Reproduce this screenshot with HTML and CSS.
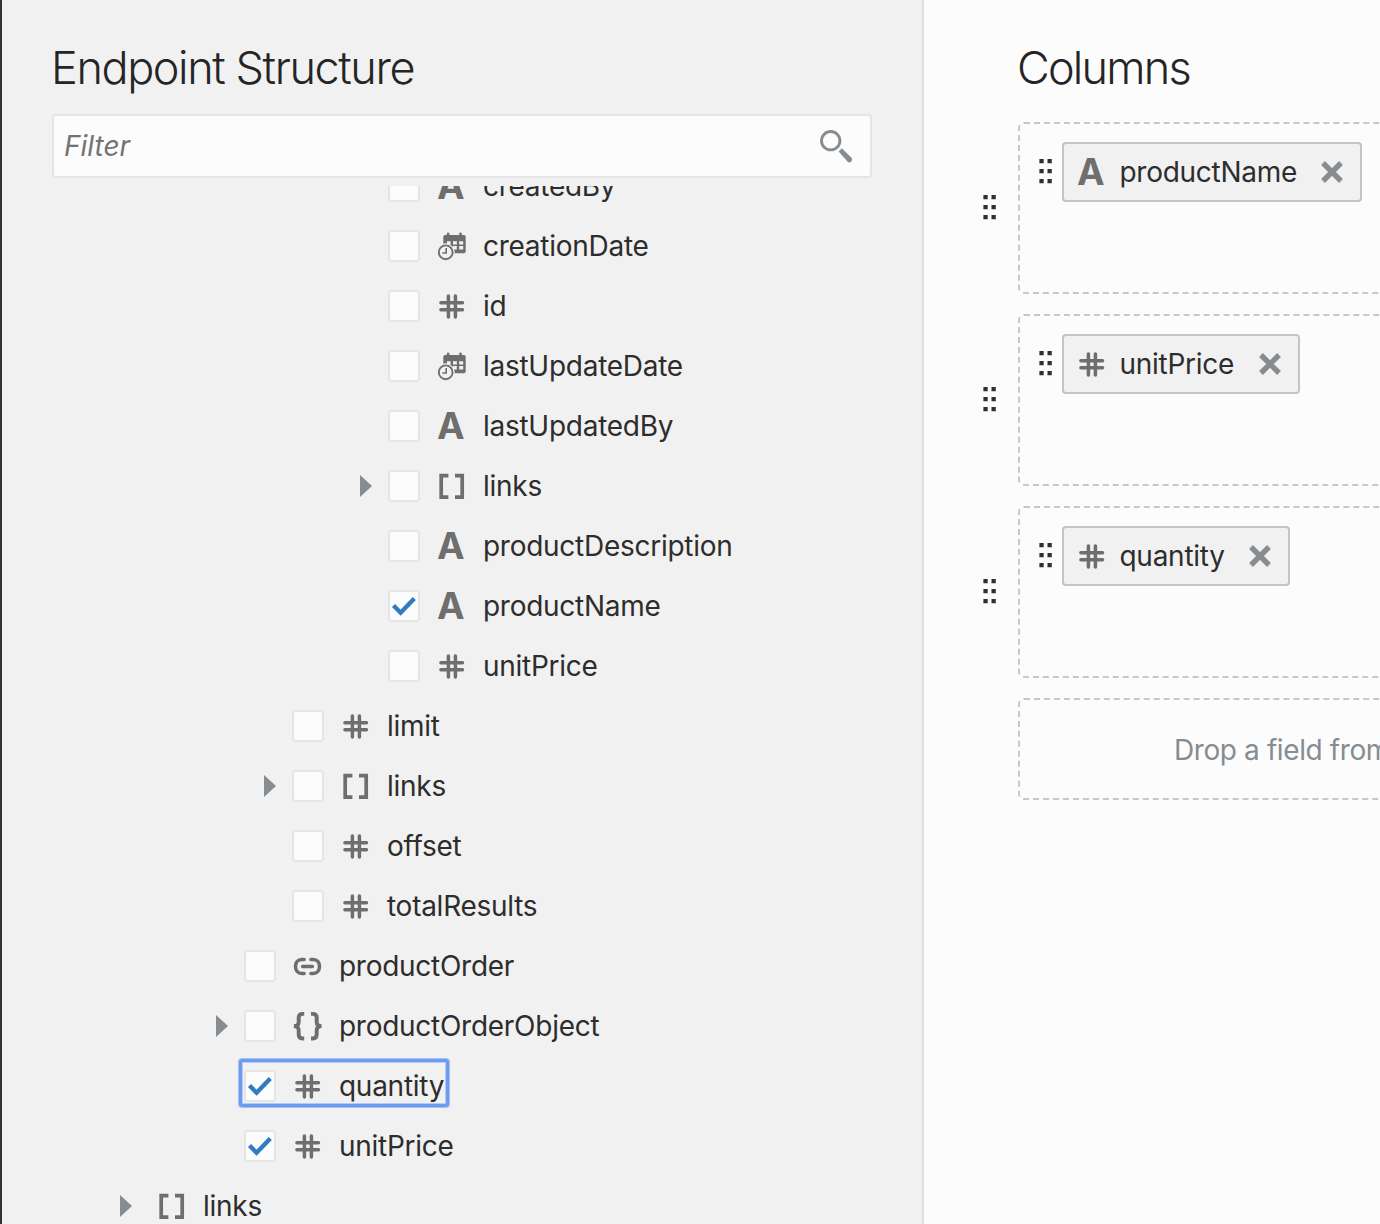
FILE: index.html
```html
<!DOCTYPE html>
<html lang="en">
<head>
<meta charset="utf-8">
<title>Endpoint Structure</title>
<link rel="stylesheet" href="styles.css">
</head>
<body>
<svg class="sprite" aria-hidden="true">
  <symbol id="number" viewBox="0 0 32 32"><path d="M12.4 5.9v21.2M19.4 5.9v21.2M4.9 12.7h21.6M4.9 19.7h21.6" fill="none" stroke="currentColor" stroke-width="3.5" stroke-linecap="round"/></symbol>
  <symbol id="array" viewBox="0 0 32 32"><path d="M12.4 5.6H5.2v21.6h7.2M19 5.6h7.2v21.6H19" fill="none" stroke="currentColor" stroke-width="3.7"/></symbol>
  <symbol id="object" viewBox="0 0 32 32"><path d="M12.2 3.900h-1.600c-2.500 0-3.900 1.400-3.900 3.800v4.200c0 2.700-1.300 4.100-4.800 4.200 3.500.1 4.800 1.600 4.800 4.300v4.200c0 2.500 1.400 3.900 3.900 3.900h1.600M19 3.900h1.800c2.500 0 3.900 1.400 3.900 3.800v4.200c0 2.700 1.300 4.100 4.800 4.200-3.500.1-4.800 1.600-4.800 4.300v4.200c0 2.500-1.400 3.900-3.900 3.900H19" fill="none" stroke="currentColor" stroke-width="3.900"/></symbol>
  <symbol id="link" viewBox="0 0 32 32"><path d="M12.100 9.400H10c-4.300 0-6.500 2.900-6.500 7s2.200 7 6.500 7h2.100M18.900 9.400H21c4.300 0 6.500 2.900 6.500 7s-2.200 7-6.500 7h-2.100M10.600 16.400h9.800" fill="none" stroke="currentColor" stroke-width="3.500" stroke-linecap="round"/></symbol>
  <symbol id="date" viewBox="0 0 32 32">
    <path d="M9 5h1.800V3.800q0-1.300 1.300-1.300t1.300 1.300V5h9.800V3.800q0-1.300 1.300-1.300t1.300 1.300V5H28q1.700 0 1.700 1.700v14.900q0 1.700-1.700 1.700H7.300V6.700Q7.300 5 9 5z" fill="currentColor"/>
    <path d="M11 11.200h3.600v3.200H11zM17 11.200h3.800v3.200H17zM23.200 11.200h4v3.200h-4zM17 16h3.800v3.400H17zM23.200 16h4v3.400h-4z" fill="#f1f1f1"/>
    <circle cx="9.700" cy="22.300" r="9" fill="#f1f1f1"/>
    <circle cx="9.700" cy="22.300" r="6.900" fill="none" stroke="currentColor" stroke-width="1.900"/>
    <path d="M10.200 18v5H6.300" fill="none" stroke="currentColor" stroke-width="1.600"/>
  </symbol>
  <symbol id="check" viewBox="0 0 28 28"><path d="M3.500 13.500l7.100 7.200L24.300 6.400" fill="none" stroke="#2f7cc4" stroke-width="4.400"/></symbol>
  <symbol id="grip" viewBox="0 0 14 26"><path d="M1.400 1h4.300v4.300H1.400zM9.500 1h4.300v4.300H9.500zM1.400 11h4.300v4.300H1.400zM9.500 11h4.300v4.300H9.500zM1.400 21h4.300v4.300H1.400zM9.500 21h4.300v4.300H9.500z" fill="#303030"/></symbol>
  <symbol id="remove" viewBox="0 0 24 24"><path d="M3 3l18 18M21 3L3 21" fill="none" stroke="#878c90" stroke-width="5.400"/></symbol>
</svg>

<div class="app">
  <section class="structure">
    <h1 class="title">Endpoint Structure</h1>
    <div class="filter">
      <span class="filter-hint">Filter</span>
      <svg class="search" viewBox="0 0 34 34"><circle cx="10.700" cy="10.700" r="9.200" fill="none" stroke="#878c90" stroke-width="2.900"/><path d="M18.600 21.600l3.200-3.300L31.500 27.800q1.500 2-.2 3.700t-3.600.2z" fill="#878c90"/></svg>
    </div>
    <div class="viewport">
      <ul class="tree">
        <li class="row depth-4"><span class="arrow"></span><span class="box"></span><span class="icon letter">A</span><span class="name">createdBy</span></li>
        <li class="row depth-4"><span class="arrow"></span><span class="box"></span><svg class="icon"><use href="#date"/></svg><span class="name">creationDate</span></li>
        <li class="row depth-4"><span class="arrow"></span><span class="box"></span><svg class="icon"><use href="#number"/></svg><span class="name">id</span></li>
        <li class="row depth-4"><span class="arrow"></span><span class="box"></span><svg class="icon"><use href="#date"/></svg><span class="name">lastUpdateDate</span></li>
        <li class="row depth-4"><span class="arrow"></span><span class="box"></span><span class="icon letter">A</span><span class="name">lastUpdatedBy</span></li>
        <li class="row depth-4"><span class="arrow closed"></span><span class="box"></span><svg class="icon"><use href="#array"/></svg><span class="name">links</span></li>
        <li class="row depth-4"><span class="arrow"></span><span class="box"></span><span class="icon letter">A</span><span class="name">productDescription</span></li>
        <li class="row depth-4"><span class="arrow"></span><span class="box"><svg class="tick"><use href="#check"/></svg></span><span class="icon letter">A</span><span class="name">productName</span></li>
        <li class="row depth-4"><span class="arrow"></span><span class="box"></span><svg class="icon"><use href="#number"/></svg><span class="name">unitPrice</span></li>
        <li class="row depth-3"><span class="arrow"></span><span class="box"></span><svg class="icon"><use href="#number"/></svg><span class="name">limit</span></li>
        <li class="row depth-3"><span class="arrow closed"></span><span class="box"></span><svg class="icon"><use href="#array"/></svg><span class="name">links</span></li>
        <li class="row depth-3"><span class="arrow"></span><span class="box"></span><svg class="icon"><use href="#number"/></svg><span class="name">offset</span></li>
        <li class="row depth-3"><span class="arrow"></span><span class="box"></span><svg class="icon"><use href="#number"/></svg><span class="name">totalResults</span></li>
        <li class="row depth-2"><span class="arrow"></span><span class="box"></span><svg class="icon"><use href="#link"/></svg><span class="name">productOrder</span></li>
        <li class="row depth-2"><span class="arrow closed"></span><span class="box"></span><svg class="icon"><use href="#object"/></svg><span class="name">productOrderObject</span></li>
        <li class="row depth-2 focused"><span class="arrow"></span><span class="box"><svg class="tick"><use href="#check"/></svg></span><svg class="icon"><use href="#number"/></svg><span class="name">quantity</span></li>
        <li class="row depth-2"><span class="arrow"></span><span class="box"><svg class="tick"><use href="#check"/></svg></span><svg class="icon"><use href="#number"/></svg><span class="name">unitPrice</span></li>
        <li class="row depth-1"><span class="arrow closed"></span><svg class="icon"><use href="#array"/></svg><span class="name">links</span></li>
      </ul>
    </div>
  </section>

  <section class="columns">
    <h1 class="title columns-title">Columns</h1>
    <div class="column">
      <svg class="grip"><use href="#grip"/></svg>
      <div class="slot"><svg class="grip"><use href="#grip"/></svg><div class="chip chip-product"><span class="icon letter">A</span><span class="name">productName</span><svg class="remove"><use href="#remove"/></svg></div></div>
    </div>
    <div class="column">
      <svg class="grip"><use href="#grip"/></svg>
      <div class="slot"><svg class="grip"><use href="#grip"/></svg><div class="chip chip-price"><svg class="icon"><use href="#number"/></svg><span class="name">unitPrice</span><svg class="remove"><use href="#remove"/></svg></div></div>
    </div>
    <div class="column">
      <svg class="grip"><use href="#grip"/></svg>
      <div class="slot"><svg class="grip"><use href="#grip"/></svg><div class="chip chip-quantity"><svg class="icon"><use href="#number"/></svg><span class="name">quantity</span><svg class="remove"><use href="#remove"/></svg></div></div>
    </div>
    <div class="slot drop-slot">Drop a field from</div>
  </section>
</div>
</body>
</html>
```
FILE: styles.css
```css
*, *::after { box-sizing: border-box; }
body {
  margin: 0;
  font-family: Inter, "Liberation Sans", sans-serif;
  font-size: 28px;
  letter-spacing: -0.27px;
  color: #2d2d2d;
  overflow: hidden;
}
.sprite { display: none; }
.app { display: flex; width: 1380px; height: 1224px; overflow: hidden; }

.title {
  margin: 0 0 0 -1px;
  height: 66px;
  line-height: 66px;
  font-size: 45px;
  font-weight: 350;
  letter-spacing: -1.4px;
  color: #252525;
  white-space: nowrap;
}

.structure {
  display: flex;
  flex-direction: column;
  flex: none;
  width: 924px;
  padding: 35px 50px 0;
  background: #f1f1f1;
  border-left: 2px solid #343436;
  border-right: 2px solid #dedede;
}
.filter {
  display: flex;
  align-items: center;
  justify-content: space-between;
  flex: none;
  height: 64px;
  margin-top: 13px;
  padding: 0 16px 0 10px;
  background: #fcfcfc;
  border: 2px solid #e5e5e5;
  border-radius: 4px;
}
.filter-hint { font-style: italic; color: #737373; letter-spacing: 0; }
.search { width: 34px; height: 34px; margin-top: 2px; }

.viewport { flex: 1; min-height: 0; margin: 8px -50px 0; overflow: hidden; }
.tree { list-style: none; margin: -30px 0 0; padding: 0; }
.row { position: relative; display: flex; align-items: center; height: 60px; }
.depth-4 { padding-left: 358px; }
.depth-3 { padding-left: 262px; }
.depth-2 { padding-left: 214px; }
.depth-1 { padding-left: 118px; }

.arrow { width: 12px; height: 22px; margin-right: 16px; }
.closed { background: #878c90; clip-path: polygon(0 0, 100% 50%, 0 100%); }
.box {
  width: 32px;
  height: 32px;
  margin-right: 16px;
  background: #fcfcfc;
  border: 2px solid #e5e5e5;
  border-radius: 4px;
}
.depth-1 .arrow { margin-right: 24px; }
.tick { display: block; width: 28px; height: 28px; }
.icon { flex: none; width: 32px; height: 32px; color: #6e6e6e; }
.letter {
  padding-left: 1px;
  font-size: 37px;
  font-weight: 700;
  line-height: 31px;
}
.name { margin-left: 15px; white-space: nowrap; }
.focused::after {
  content: "";
  position: absolute;
  left: 237px;
  top: 3px;
  width: 210px;
  height: 48px;
  border: 3px solid #6c9bf0;
  border-radius: 3px;
  box-shadow: 0 0 0 1px #a3bff5, inset 0 0 0 1px #b5cbf5;
}

.columns {
  flex: 1;
  min-width: 0;
  padding: 35px 0 0 58px;
  background: #fcfcfc;
  overflow: hidden;
}
.columns-title { margin: 0 0 21px 35px; letter-spacing: -1.8px; }
.column { display: flex; align-items: center; gap: 22px; margin-bottom: 20px; }
.grip { flex: none; width: 14px; height: 26px; margin-top: -2px; }
.slot {
  display: flex;
  align-items: flex-start;
  flex: none;
  gap: 10px;
  width: 800px;
  height: 172px;
  padding: 18px;
  border: 2px dashed #c8c8c8;
  border-radius: 6px;
}
.slot .grip { margin-top: 16px; }
.chip {
  display: flex;
  align-items: center;
  height: 60px;
  padding: 0 16px 0 12px;
  background: #f1f1f1;
  border: 2px solid #c4c4c4;
  border-radius: 4px;
}
.chip .name { margin-left: 11.5px; }
.chip-product { width: 300px; }
.chip-price { width: 238px; }
.chip-quantity { width: 228px; }
.remove { width: 24px; height: 24px; margin-left: auto; }
.drop-slot {
  align-items: center;
  height: 102px;
  margin-left: 36px;
  padding: 2px 0 0 154px;
  color: #878c90;
  letter-spacing: -0.4px;
}
```
